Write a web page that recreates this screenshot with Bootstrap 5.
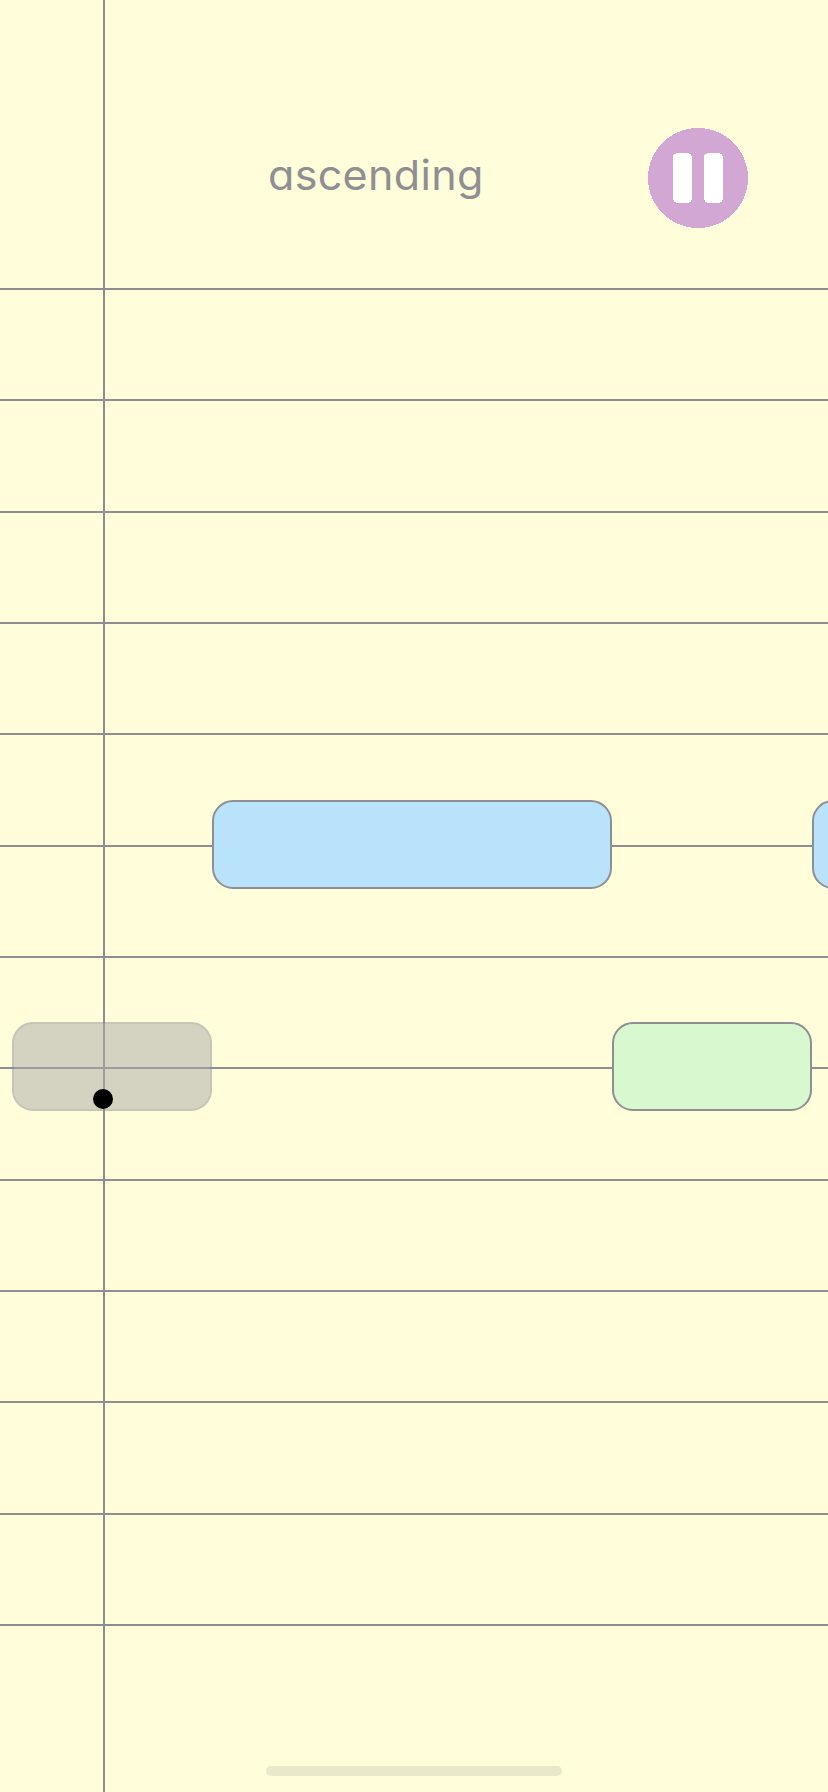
<!DOCTYPE html>
<html lang="en">
<head>
<meta charset="utf-8">
<meta name="viewport" content="width=device-width, initial-scale=1">
<title>ascending</title>
<link href="https://cdn.jsdelivr.net/npm/bootstrap@5.3.0/dist/css/bootstrap.min.css" rel="stylesheet">
<style>
  :root { --paper: #fffdda; --ink: #8e8e93; }
  body { background: var(--paper); }
  .roll { height: 1792px; }
  .roll-head { height: 290px; border-bottom: 2px solid var(--ink); padding: 128px 80px 0 0; }
  .roll-title {
    width: 230px; margin-left: 268px; height: 100px; line-height: 94px;
    font-family: Inter, "Open Sans", sans-serif; font-size: 41px; font-weight: 400;
    font-feature-settings: "cv11"; letter-spacing: .3px; color: var(--ink);
    transform: scaleX(1.05); transform-origin: left;
  }
  .pause-btn { width: 100px; height: 100px; }
  .lane { height: 111.3333px; border-bottom: 2px solid var(--ink); }
  .playhead { left: 103px; width: 2px; background: var(--ink); }
  /* notes straddle the line they are written on */
  .note { height: 89px; border: 2px solid var(--ink); border-radius: 21px; }
  .note-a { background: #b9e2fb; }
  .note-b { background: #d8f9cf; }
  .note-played { background: #aaa; opacity: .5; }
  .ball { left: 93px; top: 1089px; width: 20px; height: 20px; background: #000; }
  .home-bar { width: 296px; height: 10px; margin-bottom: 16px; background: #e9e8ca; }
</style>
</head>
<body>
<main class="roll position-relative overflow-hidden d-flex flex-column">
  <header class="roll-head d-flex justify-content-between flex-shrink-0">
    <h1 class="roll-title mb-0">ascending</h1>
    <button class="pause-btn btn p-0 border-0" aria-label="Pause">
      <svg class="d-block" width="100" height="100" viewBox="0 0 100 100" shape-rendering="crispEdges">
        <circle cx="50" cy="50" r="50" fill="#d2a7d4"/>
        <rect x="25" y="25" width="19" height="50" rx="4.5" fill="#fff"/>
        <rect x="56" y="25" width="19" height="50" rx="4.5" fill="#fff"/>
      </svg>
    </button>
  </header>
  <section class="flex-shrink-0">
    <div class="lane"></div><div class="lane"></div><div class="lane"></div>
    <div class="lane"></div><div class="lane"></div><div class="lane"></div>
    <div class="lane"></div><div class="lane"></div><div class="lane"></div>
    <div class="lane"></div><div class="lane"></div><div class="lane"></div>
  </section>
  <div class="playhead position-absolute top-0 bottom-0"></div>
  <div class="note note-a position-absolute" style="left:212px;top:800px;width:400px"></div>
  <div class="note note-a position-absolute" style="left:812px;top:800px;width:200px"></div>
  <div class="note note-played position-absolute" style="left:12px;top:1022px;width:200px"></div>
  <div class="note note-b position-absolute" style="left:612px;top:1022px;width:200px"></div>
  <div class="ball position-absolute rounded-circle"></div>
  <div class="home-bar rounded-pill mx-auto mt-auto"></div>
</main>
<script src="https://cdn.jsdelivr.net/npm/bootstrap@5.3.0/dist/js/bootstrap.bundle.min.js"></script>
</body>
</html>
